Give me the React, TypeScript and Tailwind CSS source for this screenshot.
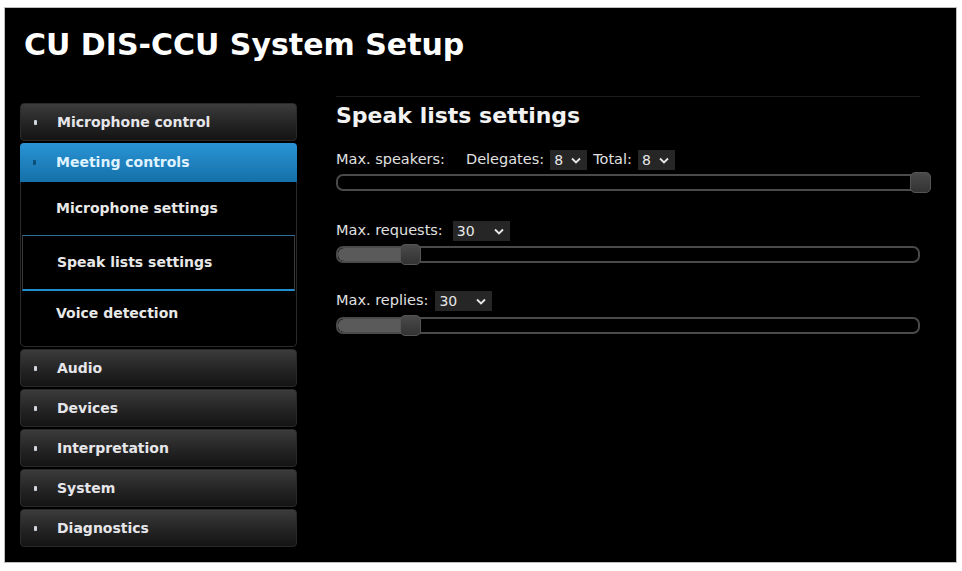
import React, { useState } from 'react';

const groups = ['Audio', 'Devices', 'Interpretation', 'System', 'Diagnostics'];
const subItems = [
  { label: 'Microphone settings', h: 'h-[53px]' },
  { label: 'Speak lists settings', h: 'h-[56px]' },
  { label: 'Voice detection', h: 'h-[44px]' },
];

const Bullet = ({ color = 'bg-gray-300' }: { color?: string }) => (
  <span className={`w-[3px] h-[5px] ${color} rounded-[1px] inline-block`} />
);

const MenuHeader = ({ label }: { label: string }) => (
  <div className="h-[38px] rounded-[4px] bg-gradient-to-b from-[#3c3c3c] via-[#262626] to-[#141414] border border-[#2a2a2a] flex items-center pl-[13px] gap-[20px] text-[#e6e6ea] text-[14px] font-bold">
    <Bullet />
    <span>{label}</span>
  </div>
);

const Select = ({ value, wide }: { value: string; wide?: boolean }) => (
  <span className={`inline-flex items-center justify-between bg-[#262626] text-[#e8e8e8] h-[20px] px-[4px] ${wide ? 'w-[57px]' : 'w-[37px]'} text-[14px]`}>
    <span>{value}</span>
    <svg width="10" height="7" viewBox="0 0 10 7" className="mr-[2px]">
      <path d="M1 1.5 L5 5.5 L9 1.5" stroke="#e8e8e8" strokeWidth="1.8" fill="none" />
    </svg>
  </span>
);

const Slider = ({ pct, fill = true }: { pct: number; fill?: boolean }) => (
  <div className="relative h-[17px] w-[584px] rounded-[7px] border-2 border-[#4a4a4a] bg-black">
    {fill && <div className="absolute left-0 top-0 bottom-0 rounded-l-[6px] bg-[#5a5a5a]" style={{ width: `${pct}%` }} />}
    <div
      className="absolute top-[-4px] h-[21px] w-[21px] rounded-[5px] bg-gradient-to-b from-[#4a4a4a] to-[#333] border border-[#555]"
      style={{ left: `calc(${pct}% - 8px)` }}
    />
  </div>
);

export default function App() {
  const [active] = useState('Speak lists settings');
  return (
    <div className="w-[962px] h-[571px] bg-white pt-[7px] pl-[4px]" style={{ fontFamily: '"DejaVu Sans", Verdana, sans-serif' }}>
      <div className="w-[953px] h-[556px] bg-black border border-[#bdbdbd]">
        <h1 className="text-white font-bold text-[30px] pl-[19px] pt-[19px] leading-[36px]">
          CU DIS-CCU System Setup
        </h1>
        <div className="flex mt-[40px] pl-[15px]">
          <nav className="w-[277px] flex flex-col gap-[2px]">
            <MenuHeader label="Microphone control" />
            <div>
              <div className="h-[39px] rounded-t-[4px] bg-gradient-to-b from-[#2a94d6] to-[#1470a8] flex items-center pl-[13px] gap-[20px] text-[#dff2ff] text-[14px] font-bold">
                <Bullet color="bg-[#0d4f7a]" />
                <span>Meeting controls</span>
              </div>
              <div className="h-[165px] border border-t-0 border-[#2b2b2b] rounded-b-[5px] flex flex-col">
                {subItems.map((s) => (
                  <div
                    key={s.label}
                    className={`${s.h} mx-[1px] flex items-center pl-[34px] text-[#e8e8e8] text-[14px] font-bold ${
                      s.label === active ? 'border border-[#3a3a3a] border-b-2 border-b-[#1f8fd0] border-t-[#2a6f99]' : ''
                    }`}
                  >
                    {s.label}
                  </div>
                ))}
              </div>
            </div>
            {groups.map((g) => (
              <MenuHeader key={g} label={g} />
            ))}
          </nav>
          <main className="ml-[39px] flex-1 text-[#e0e0e0]">
            <div className="w-[584px] border-t border-[#1c1c1c] mt-[-7px]" />
            <h2 className="text-[22px] font-bold text-[#f2f2f2] mt-[6px] leading-[26px]">Speak lists settings</h2>
            <div className="mt-[21px] flex items-center gap-[6px] text-[14.5px] h-[20px]">
              <span>Max. speakers:</span>
              <span className="ml-[15px]">Delegates:</span>
              <Select value="8" />
              <span>Total:</span>
              <Select value="8" />
            </div>
            <div className="mt-[4px]">
              <Slider pct={100} fill={false} />
            </div>
            <div className="mt-[30px] flex items-center gap-[10px] text-[14.5px] h-[20px]">
              <span>Max. requests:</span>
              <Select value="30" wide />
            </div>
            <div className="mt-[5px]">
              <Slider pct={12} />
            </div>
            <div className="mt-[28px] flex items-center gap-[7px] text-[14.5px] h-[20px]">
              <span>Max. replies:</span>
              <Select value="30" wide />
            </div>
            <div className="mt-[6px]">
              <Slider pct={12} />
            </div>
          </main>
        </div>
      </div>
    </div>
  );
}
